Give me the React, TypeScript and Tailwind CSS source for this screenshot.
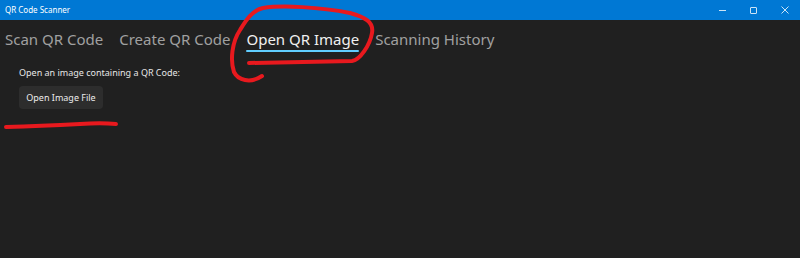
import React from 'react';

const tabs = ['Scan QR Code', 'Create QR Code', 'Open QR Image', 'Scanning History'];

export default function App() {
  const active = 2;

  return (
    <div className="relative w-[800px] h-[258px] bg-[#202020] overflow-hidden" style={{ fontFamily: '"Noto Sans", "Open Sans", sans-serif' }}>
      {/* title bar */}
      <div className="h-[20px] bg-[#0078d4] flex items-center justify-between pl-[5px] text-white">
        <span className="text-[8px] leading-none">QR Code Scanner</span>
        <div className="flex items-center h-full">
          <div className="w-[31px] h-full flex items-center justify-center">
            <div className="w-[7px] h-px bg-white/80" />
          </div>
          <div className="w-[31px] h-full flex items-center justify-center">
            <div className="w-[7px] h-[7px] border border-white/80 rounded-[1px]" />
          </div>
          <div className="w-[31px] h-full flex items-center justify-center">
            <svg width="8" height="8" viewBox="0 0 8 8" className="stroke-white/80">
              <path d="M0.5 0.5 L7.5 7.5 M7.5 0.5 L0.5 7.5" strokeWidth="1" />
            </svg>
          </div>
        </div>
      </div>

      {/* tabs */}
      <div className="flex items-start gap-[16px] pl-[5px] pt-[9px]">
        {tabs.map((t, i) => (
          <div key={t} className="flex flex-col items-center">
            <span className={`text-[15px] leading-[20px] ${i === active ? 'text-[#f0f0f0]' : 'text-[#a0a0a0]'}`}>{t}</span>
            {i === active && <div className="mt-px h-[2px] w-full bg-[#60cdff] rounded-full" />}
          </div>
        ))}
      </div>

      {/* page content */}
      <div className="pl-[19px] pt-[15px] flex flex-col items-start gap-[7px]">
        <p className="text-[9px] text-[#e6e6e6] leading-[12px]">Open an image containing a QR Code:</p>
        <button className="h-[23px] w-[84px] rounded-[4px] bg-[#2d2d2d] text-[9px] text-[#ececec]">Open Image File</button>
      </div>

      {/* red marker annotations */}
      <svg className="absolute inset-0 pointer-events-none" width="800" height="258" viewBox="0 0 800 258" fill="none">
        <path
          d="M249 63 L352 61 C360 60 370 45 372 33 C374 22 365 17 350 13 C320 7 282 5 263 8 C252 10 245 22 240 30 C232 42 230 60 234 72 C238 80 250 84 262 76"
          stroke="#e8191e" strokeWidth="4" strokeLinecap="round" strokeLinejoin="round"
        />
        <path d="M6 127 C40 126 60 125 80 124 C95 123 105 123 116 124" stroke="#e8191e" strokeWidth="4" strokeLinecap="round" />
      </svg>
    </div>
  );
}
